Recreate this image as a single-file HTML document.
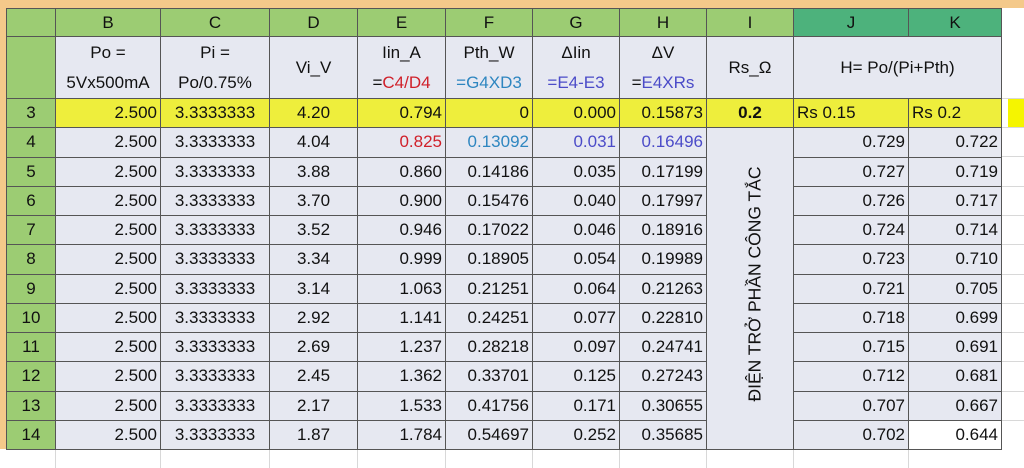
<!DOCTYPE html>
<html><head><meta charset="utf-8"><style>
body{margin:0;width:1024px;height:468px;overflow:hidden;background:#fff;position:relative;font-family:"Liberation Sans","DejaVu Sans",sans-serif;}
.top{position:absolute;left:0;top:0;width:1024px;height:8px;background:#f4c98a;}
.left{position:absolute;left:0;top:0;width:6px;height:449px;background:#f4c98a;}
.grid{position:absolute;top:449px;left:0;width:1024px;height:19px;}
table{position:absolute;left:6px;top:8px;border-collapse:collapse;table-layout:fixed;font-size:17px;color:#111;}
td{border:1px solid #555;padding:0 3px;height:28.25px;white-space:nowrap;overflow:hidden;background:#e6e8f1;text-align:right;}
tr.h td{background:#9ccc73;text-align:center;height:27px;}
tr.h td.dk{background:#4db27c;}
tr.t td{text-align:center;height:61px;line-height:30px;}
td.rn{background:#9ccc73;text-align:center;}
tr.y td{background:#eeee3c;}
tr.y td.rn{background:#9ccc73;}
.r{color:#d0202a}.b{color:#2e86c0}.p{color:#4b4bc8}
.c{text-align:center}
.vt{position:absolute;left:755px;top:284px;transform:translate(-50%,-50%) rotate(-90deg);font-size:17.5px;white-space:nowrap;color:#111;}
</style></head><body>
<div class="top"></div><div class="left"></div>
<div style="position:absolute;left:1008px;top:98px;width:16px;height:29px;background:#f5f500"></div>
<svg class="grid" width="1024" height="19"><g stroke="#d8d8d8"><line x1="55.5" y1="0" x2="55.5" y2="19"/><line x1="160.5" y1="0" x2="160.5" y2="19"/><line x1="269.5" y1="0" x2="269.5" y2="19"/><line x1="357.5" y1="0" x2="357.5" y2="19"/><line x1="445.5" y1="0" x2="445.5" y2="19"/><line x1="532.5" y1="0" x2="532.5" y2="19"/><line x1="619.5" y1="0" x2="619.5" y2="19"/><line x1="706.5" y1="0" x2="706.5" y2="19"/><line x1="793.5" y1="0" x2="793.5" y2="19"/><line x1="908.5" y1="0" x2="908.5" y2="19"/></g></svg>
<svg style="position:absolute;left:1002px;top:36px" width="22" height="413"><g stroke="#d8d8d8"><line x1="0" y1="62.5" x2="22" y2="62.5"/><line x1="0" y1="91.5" x2="22" y2="91.5"/><line x1="0" y1="120.5" x2="22" y2="120.5"/><line x1="0" y1="150.5" x2="22" y2="150.5"/><line x1="0" y1="179.5" x2="22" y2="179.5"/><line x1="0" y1="208.5" x2="22" y2="208.5"/><line x1="0" y1="238.5" x2="22" y2="238.5"/><line x1="0" y1="267.5" x2="22" y2="267.5"/><line x1="0" y1="296.5" x2="22" y2="296.5"/><line x1="0" y1="325.5" x2="22" y2="325.5"/><line x1="0" y1="355.5" x2="22" y2="355.5"/><line x1="0" y1="384.5" x2="22" y2="384.5"/></g></svg>
<table>
<colgroup><col style="width:49px"><col style="width:105px"><col style="width:109px"><col style="width:88px"><col style="width:88px"><col style="width:87px"><col style="width:87px"><col style="width:87px"><col style="width:87px"><col style="width:115px"><col style="width:93px"></colgroup>
<tr class="h"><td></td><td>B</td><td>C</td><td>D</td><td>E</td><td>F</td><td>G</td><td>H</td><td>I</td><td class="dk">J</td><td class="dk">K</td></tr>
<tr class="t"><td class="rn"></td><td>Po =<br>5Vx500mA</td><td>Pi =<br>Po/0.75%</td><td>Vi_V</td><td>Iin_A<br>=<span class="r">C4/D4</span></td><td>Pth_W<br><span class="b">=G4XD3</span></td><td>ΔIin<br><span class="p">=E4-E3</span></td><td>ΔV<br>=<span class="p">E4XRs</span></td><td>Rs_Ω</td><td colspan="2">H= Po/(Pi+Pth)</td></tr>
<tr class="y"><td class="rn">3</td><td>2.500</td><td class="c">3.3333333</td><td class="c">4.20</td><td>0.794</td><td>0</td><td>0.000</td><td>0.15873</td><td class="c"><b>0.2</b></td><td style="text-align:left">Rs 0.15</td><td style="text-align:left">Rs 0.2</td></tr>
<tr><td class="rn">4</td><td>2.500</td><td class="c">3.3333333</td><td class="c">4.04</td><td class="r">0.825</td><td class="b">0.13092</td><td class="p">0.031</td><td class="p">0.16496</td><td rowspan="11"></td><td>0.729</td><td>0.722</td></tr>
<tr><td class="rn">5</td><td>2.500</td><td class="c">3.3333333</td><td class="c">3.88</td><td>0.860</td><td>0.14186</td><td>0.035</td><td>0.17199</td><td>0.727</td><td>0.719</td></tr>
<tr><td class="rn">6</td><td>2.500</td><td class="c">3.3333333</td><td class="c">3.70</td><td>0.900</td><td>0.15476</td><td>0.040</td><td>0.17997</td><td>0.726</td><td>0.717</td></tr>
<tr><td class="rn">7</td><td>2.500</td><td class="c">3.3333333</td><td class="c">3.52</td><td>0.946</td><td>0.17022</td><td>0.046</td><td>0.18916</td><td>0.724</td><td>0.714</td></tr>
<tr><td class="rn">8</td><td>2.500</td><td class="c">3.3333333</td><td class="c">3.34</td><td>0.999</td><td>0.18905</td><td>0.054</td><td>0.19989</td><td>0.723</td><td>0.710</td></tr>
<tr><td class="rn">9</td><td>2.500</td><td class="c">3.3333333</td><td class="c">3.14</td><td>1.063</td><td>0.21251</td><td>0.064</td><td>0.21263</td><td>0.721</td><td>0.705</td></tr>
<tr><td class="rn">10</td><td>2.500</td><td class="c">3.3333333</td><td class="c">2.92</td><td>1.141</td><td>0.24251</td><td>0.077</td><td>0.22810</td><td>0.718</td><td>0.699</td></tr>
<tr><td class="rn">11</td><td>2.500</td><td class="c">3.3333333</td><td class="c">2.69</td><td>1.237</td><td>0.28218</td><td>0.097</td><td>0.24741</td><td>0.715</td><td>0.691</td></tr>
<tr><td class="rn">12</td><td>2.500</td><td class="c">3.3333333</td><td class="c">2.45</td><td>1.362</td><td>0.33701</td><td>0.125</td><td>0.27243</td><td>0.712</td><td>0.681</td></tr>
<tr><td class="rn">13</td><td>2.500</td><td class="c">3.3333333</td><td class="c">2.17</td><td>1.533</td><td>0.41756</td><td>0.171</td><td>0.30655</td><td>0.707</td><td>0.667</td></tr>
<tr><td class="rn">14</td><td>2.500</td><td class="c">3.3333333</td><td class="c">1.87</td><td>1.784</td><td>0.54697</td><td>0.252</td><td>0.35685</td><td>0.702</td><td style="background:#fff">0.644</td></tr>
</table>
<div class="vt">ĐIỆN TRỞ PHẦN CÔNG TẮC</div>
</body></html>
